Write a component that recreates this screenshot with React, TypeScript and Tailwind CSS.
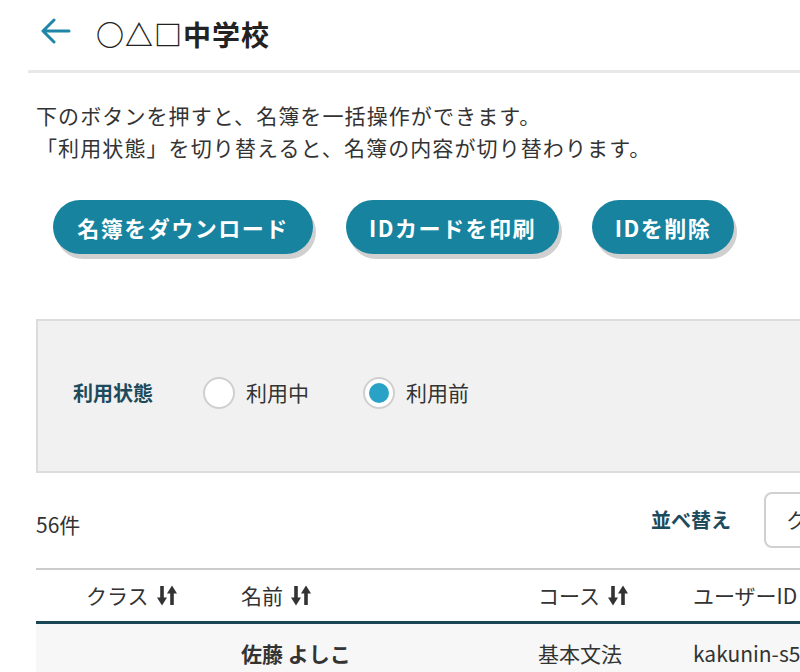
import React from "react";

const SortIcon = () => (
  <svg width="20" height="21" viewBox="0 0 20 21" className="ml-[8px] shrink-0">
    <path d="M5 1 V14" stroke="#333" strokeWidth="3.6" />
    <path d="M0 12.5 L10 12.5 L5 20.5 Z" fill="#333" />
    <path d="M15 20 V7" stroke="#333" strokeWidth="3.6" />
    <path d="M10 8.5 L20 8.5 L15 0.5 Z" fill="#333" />
  </svg>
);

const Radio = ({ checked, label }: { checked: boolean; label: string }) => (
  <div className="flex items-center">
    <div className="w-[32px] h-[32px] rounded-full bg-white border-2 border-[#cfcfcf] flex items-center justify-center">
      {checked && <div className="w-[20px] h-[20px] rounded-full bg-[#2aa2c6]" />}
    </div>
    <span className="ml-[11px] text-[21px] text-[#333]">{label}</span>
  </div>
);

const Btn = ({ label, w }: { label: string; w: string }) => (
  <button
    className={`${w} h-[54px] rounded-full bg-[#17839f] text-white text-[22px] tracking-[1.5px] font-bold shadow-[3px_5px_0_#d0d0d0] flex items-center justify-center`}
  >
    {label}
  </button>
);

export default function App() {
  return (
    <div
      className="w-[800px] h-[672px] overflow-hidden bg-white text-[#333]"
      style={{ fontFamily: '"Noto Sans CJK JP", "Noto Sans", sans-serif' }}
    >
      <div className="w-[1100px]">
        <div className="h-[70px] flex items-center">
          <svg width="30" height="26" viewBox="0 0 30 26" className="ml-[41px] -mt-[8px]">
            <path d="M28 13 H3 M13 2 L2 13 L13 24" stroke="#1f86a8" strokeWidth="3" fill="none" strokeLinecap="round" strokeLinejoin="round" />
          </svg>
          <h1 className="ml-[25px] text-[28px] font-bold text-[#222] tracking-[1px] -mt-[2px]">○△□中学校</h1>
        </div>
        <div className="ml-[28px] h-[3px] bg-[#e7e8ea]" />
        <div className="ml-[36px]">
          <p className="mt-[26px] text-[21px] leading-[32px] tracking-[1.1px] text-[#333]">
            下のボタンを押すと、名簿を一括操作ができます。
            <br />
            「利用状態」を切り替えると、名簿の内容が切り替わります。
          </p>
          <div className="mt-[37px] ml-[17px] flex gap-[33px]">
            <Btn label="名簿をダウンロード" w="w-[260px]" />
            <Btn label="IDカードを印刷" w="w-[213px]" />
            <Btn label="IDを削除" w="w-[142px]" />
          </div>
          <div className="mt-[65px] h-[154px] bg-[#f1f1f1] border-2 border-[#dcdcdc] flex items-center pl-[35px] pb-[7px]">
            <span className="text-[20px] font-bold text-[#1d4b5b] w-[130px]">利用状態</span>
            <Radio checked={false} label="利用中" />
            <div className="ml-[54px]">
              <Radio checked={true} label="利用前" />
            </div>
          </div>
          <div className="mt-[19px] h-[56px] flex items-center">
            <span className="w-[615px] text-[21px] mt-[10px]">56件</span>
            <span className="text-[20px] font-bold text-[#1d4b5b] mt-[-1px]">並べ替え</span>
            <div className="ml-[33px] w-[200px] h-[56px] border-2 border-[#d0d0d0] rounded-[8px] bg-white flex items-center pl-[20px] text-[21px]">
              クラス順
            </div>
          </div>
          <div className="mt-[20px] border-t-2 border-[#cccccc]">
            <div className="h-[54px] flex items-center text-[21px] border-b-[3px] border-[#1a4656]">
              <div className="w-[205px] pl-[50px] flex items-center">クラス<SortIcon /></div>
              <div className="w-[297px] flex items-center">名前<SortIcon /></div>
              <div className="w-[155px] flex items-center">コース<SortIcon /></div>
              <div className="flex items-center">ユーザーID<SortIcon /></div>
            </div>
            <div className="h-[60px] flex items-center text-[21px] bg-[#f7f7f7]">
              <div className="w-[205px]" />
              <div className="w-[297px] font-bold">佐藤 よしこ</div>
              <div className="w-[155px]">基本文法</div>
              <div>kakunin-s5001</div>
            </div>
          </div>
        </div>
      </div>
    </div>
  );
}
